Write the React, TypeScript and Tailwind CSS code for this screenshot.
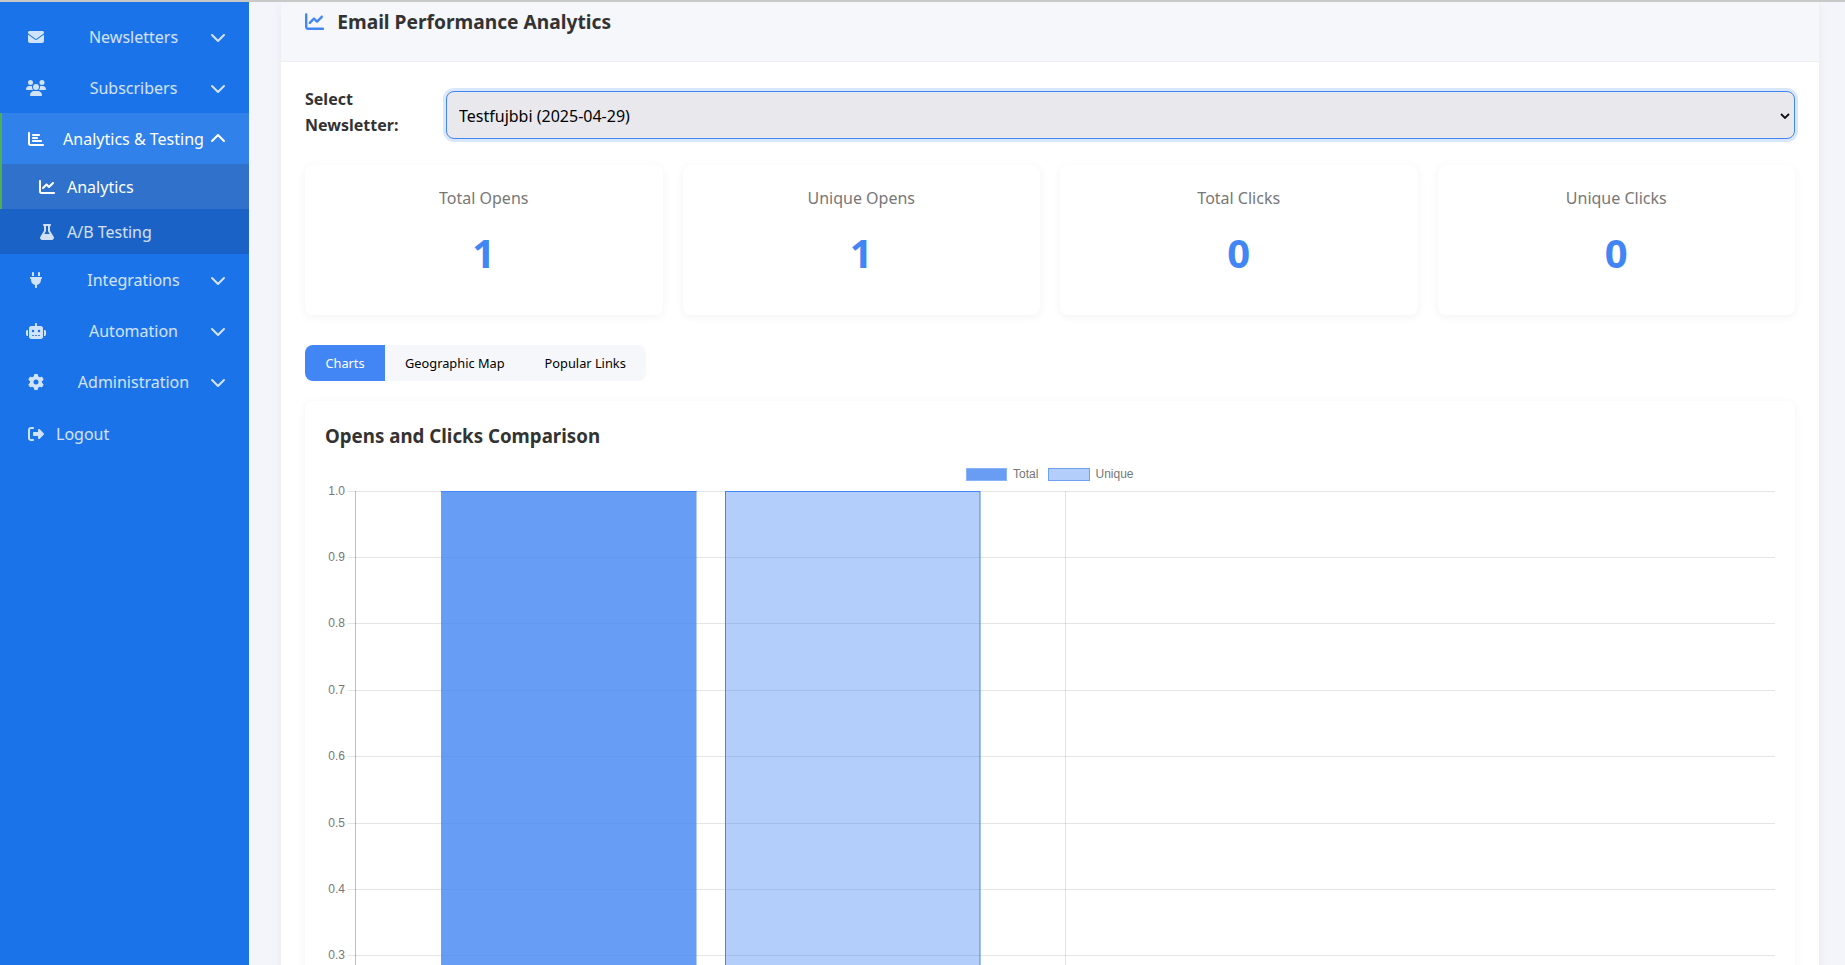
import React from "react";
import {
  FaEnvelope,
  FaUsers,
  FaChartBar,
  FaChartLine,
  FaFlask,
  FaPlug,
  FaRobot,
  FaGear,
  FaRightFromBracket,
  FaChevronDown,
  FaChevronUp,
} from "react-icons/fa6";

const NavItem = ({ icon, label, open, active }: { icon: React.ReactNode; label: string; open?: boolean; active?: boolean }) => (
  <div className={`flex h-[51px] items-center pl-6 ${active ? "bg-[#3181ea] text-white border-l-2 border-[#4caf50]" : "text-white/80"}`}>
    <span className={`flex w-6 justify-center text-[16px] ${active ? "-ml-0.5" : ""}`}>{icon}</span>
    <span className="ml-[15px] w-[141px] text-center whitespace-nowrap text-[16px]">{label}</span>
    <span className="ml-[6px] flex w-4 justify-center text-[16px]">{open ? <FaChevronUp /> : <FaChevronDown />}</span>
  </div>
);

const SubItem = ({ icon, label, active }: { icon: React.ReactNode; label: string; active?: boolean }) => (
  <div className={`flex h-[45px] items-center pl-[39px] text-[16px] ${active ? "bg-[#3071cc] text-white border-l-2 border-[#4caf50]" : "bg-[#1a62c5] text-white/80"}`}>
    <span className={`flex w-4 justify-center ${active ? "-ml-0.5" : ""}`}>{icon}</span>
    <span className="ml-[12px]">{label}</span>
  </div>
);

const Sidebar = () => (
  <aside className="w-[249px] shrink-0 bg-[#1a73e8] pt-[9px]">
    <NavItem icon={<FaEnvelope />} label="Newsletters" />
    <NavItem icon={<FaUsers className="text-[20px]" />} label="Subscribers" />
    <NavItem icon={<FaChartBar />} label="Analytics & Testing" open active />
    <SubItem icon={<FaChartLine />} label="Analytics" active />
    <SubItem icon={<FaFlask />} label="A/B Testing" />
    <NavItem icon={<FaPlug />} label="Integrations" />
    <NavItem icon={<FaRobot className="text-[20px]" />} label="Automation" />
    <NavItem icon={<FaGear />} label="Administration" />
    <div className="mt-px flex h-[51px] items-center pl-6 text-[16px] text-white/80">
      <span className="flex w-6 justify-center"><FaRightFromBracket /></span>
      <span className="ml-[8px]">Logout</span>
    </div>
  </aside>
);

const StatCard = ({ label, value }: { label: string; value: string }) => (
  <div className="flex h-[150px] flex-col items-center rounded-lg bg-white pt-[20px] shadow-[0_2px_10px_rgba(0,0,0,0.05)]">
    <div className="text-[16px] leading-[26px] text-[#777]">{label}</div>
    <div className="mt-3 text-[40px] font-bold leading-[60px] text-[#4285f4]">{value}</div>
  </div>
);

const ticks = ["1.0", "0.9", "0.8", "0.7", "0.6", "0.5", "0.4", "0.3"];

const Chart = () => (
  <svg width="1450" height="520" className="block" fontFamily="'Liberation Sans', Arial, sans-serif" fontSize="12" fill="#777">
    <rect x="641.5" y="8.5" width="40" height="12" fill="#689df3" stroke="#8ab4f8" />
    <text x="688" y="18">Total</text>
    <rect x="723.5" y="8.5" width="41" height="12" fill="#b3cefa" stroke="#6ea1f6" />
    <text x="770.5" y="18">Unique</text>
    {ticks.map((t, i) => {
      const y = Math.floor(31 + i * 66.4) + 0.5;
      return (
        <g key={t}>
          <line x1="22.5" x2="1450" y1={y} y2={y} stroke="rgba(0,0,0,0.1)" />
          <text x="20" y={y + 3} textAnchor="end">{t}</text>
        </g>
      );
    })}
    <line x1="30.5" x2="30.5" y1="31" y2="520" stroke="rgba(0,0,0,0.25)" />
    <line x1="740.5" x2="740.5" y1="31" y2="520" stroke="rgba(0,0,0,0.1)" />
    <rect x="116" y="31" width="255.5" height="489" fill="rgba(66,133,244,0.8)" />
    <line x1="116" x2="371.5" y1="31.5" y2="31.5" stroke="#4285f4" />
    <rect x="400.5" y="31.5" width="254.5" height="489" fill="rgba(66,133,244,0.4)" stroke="#4285f4" />
  </svg>
);

export default function App() {
  return (
    <div className="flex h-screen overflow-hidden border-t-2 border-[#c8c8c8] bg-[#f4f5fb] font-['Noto_Sans',sans-serif]">
      <Sidebar />
      <main className="min-w-0 flex-1 pl-8 pr-[26px]">
        <section className="shadow-[0_2px_10px_rgba(0,0,0,0.05)]">
          <div className="flex h-[60px] items-start border-b border-[#eeeeee] bg-[#f5f7fb] pl-6 pt-[6px]">
            <FaChartLine className="mt-[4px] text-[19.2px] text-[#4285f4]" />
            <h2 className="ml-[13px] text-[19.2px] font-bold leading-[28px] text-[#333]">Email Performance Analytics</h2>
          </div>
          <div className="bg-white px-6 pt-6">
            <div className="flex items-start">
              <label className="w-[141px] pr-[30px] text-[16px] font-bold leading-[26px] text-[#333]">Select Newsletter:</label>
              <div className="relative mt-[5px] min-w-0 flex-1">
                <select className="block h-12 w-full appearance-none rounded-lg border border-[#4285f4] bg-[#e8e8ed] pl-3 pr-6 pt-0.5 text-[16px] text-black shadow-[0_0_0_3px_rgba(66,133,244,0.2)] outline-none">
                  <option>Testfujbbi (2025-04-29)</option>
                </select>
                <svg width="10" height="6" viewBox="0 0 10 6" className="pointer-events-none absolute right-[5px] top-[22px]" fill="none" stroke="#111" strokeWidth="1.8">
                  <path d="M1 1l4 4 4-4" />
                </svg>
              </div>
            </div>
            <div className="mt-[26px] grid grid-cols-4 gap-5">
              <StatCard label="Total Opens" value="1" />
              <StatCard label="Unique Opens" value="1" />
              <StatCard label="Total Clicks" value="0" />
              <StatCard label="Unique Clicks" value="0" />
            </div>
            <div className="mt-[30px] flex h-9 w-fit overflow-hidden rounded-lg bg-[#f5f7fb] text-[12.8px] font-[450]">
              <div className="flex w-20 items-center justify-center bg-[#4285f4] pt-px text-white">Charts</div>
              <div className="flex items-center px-5 pt-px text-black">Geographic Map</div>
              <div className="flex items-center px-5 pt-px text-black">Popular Links</div>
            </div>
            <div className="mt-5 rounded-lg bg-white p-5 shadow-[0_2px_10px_rgba(0,0,0,0.05)]">
              <h3 className="text-[18.72px] font-bold leading-[30px] text-[#333]">Opens and Clicks Comparison</h3>
              <div className="mt-[9px]">
                <Chart />
              </div>
            </div>
          </div>
        </section>
      </main>
    </div>
  );
}
